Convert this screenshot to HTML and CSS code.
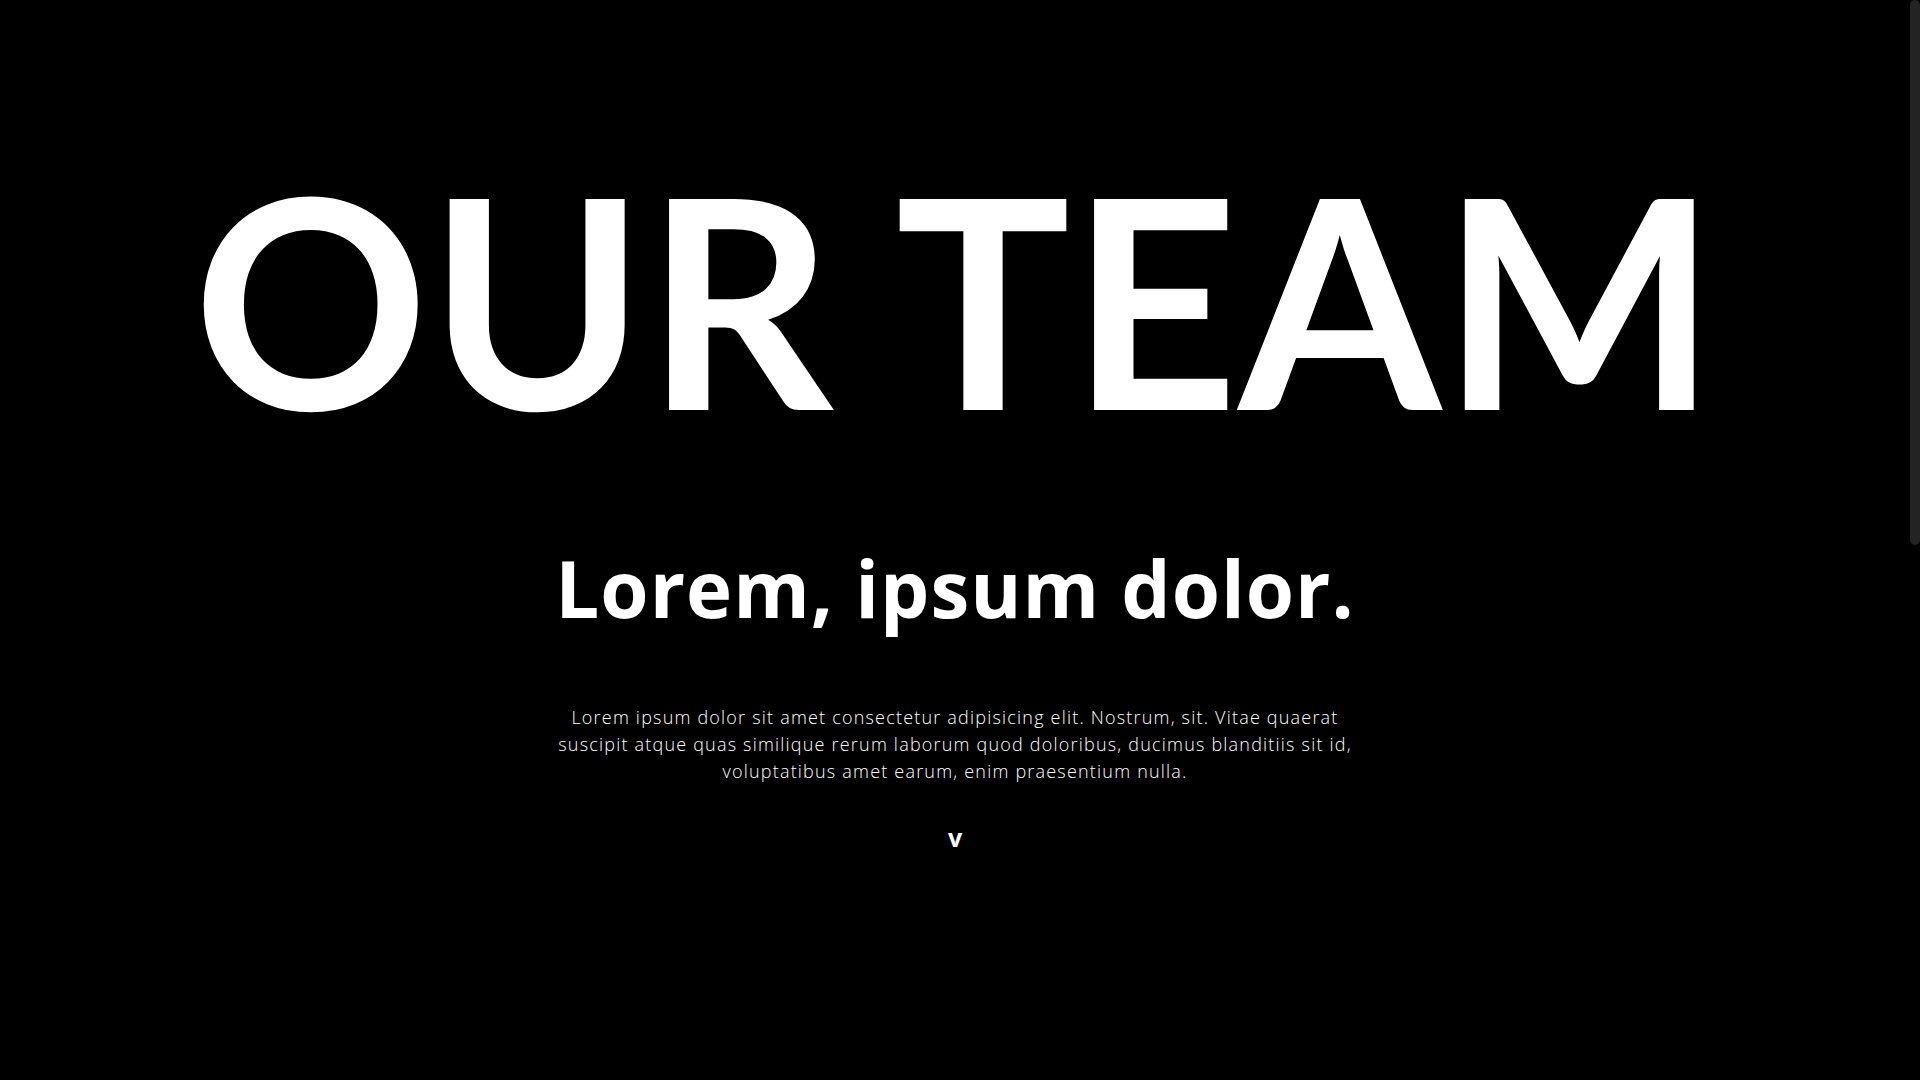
FILE: index.html
```html
<!DOCTYPE html>
<html lang="en">
<head>
<meta charset="utf-8">
<title>Our Team</title>
<link rel="stylesheet" href="styles.css">
</head>
<body>
<header class="hero">
  <h1 class="hero-title">OUR TEAM</h1>
  <h2 class="hero-subtitle">Lorem, ipsum dolor.</h2>
  <p class="hero-text">Lorem ipsum dolor sit amet consectetur adipisicing elit. Nostrum, sit. Vitae quaerat suscipit atque quas similique rerum laborum quod doloribus, ducimus blanditiis sit id, voluptatibus amet earum, enim praesentium nulla.</p>
  <a class="hero-arrow" href="#team">v</a>
</header>
<section class="team" id="team"></section>
<div class="scrollbar" aria-hidden="true"><div class="scrollbar-thumb"></div></div>
</body>
</html>
```
FILE: styles.css
```css
html {
  background: #000;
  scrollbar-width: none;
}
::-webkit-scrollbar { display: none; }

body {
  margin: 0;
  padding-right: 10px;
  background: #000;
  color: #fff;
  font-family: "Open Sans", "Liberation Sans", sans-serif;
}

.hero {
  display: flex;
  flex-direction: column;
  align-items: center;
  text-align: center;
  padding-top: 151px;
  min-height: 1080px;
  box-sizing: border-box;
}

.hero-title {
  margin: 0;
  font-family: "Lato", "Open Sans", sans-serif;
  font-size: 292px;
  line-height: 1;
  font-weight: 700;
}

.hero-subtitle {
  margin: 106px 0 0;
  font-size: 78px;
  line-height: 1;
  font-weight: 700;
  letter-spacing: 1px;
}

.hero-text {
  margin: 77px 0 0;
  max-width: 800px;
  font-size: 18px;
  line-height: 27px;
  font-weight: 300;
  letter-spacing: 1.2px;
  color: #fff;
}

.hero-arrow {
  margin-top: 40px;
  font-size: 25px;
  font-weight: 700;
  color: #fff;
  text-decoration: none;
  line-height: 1;
}

.team {
  height: 900px;
}

.scrollbar {
  position: fixed;
  top: 0;
  right: 0;
  width: 10px;
  height: 100vh;
  background: #000;
}

.scrollbar-thumb {
  width: 10px;
  height: 545px;
  background: #232323;
  border-radius: 5px;
}
```
